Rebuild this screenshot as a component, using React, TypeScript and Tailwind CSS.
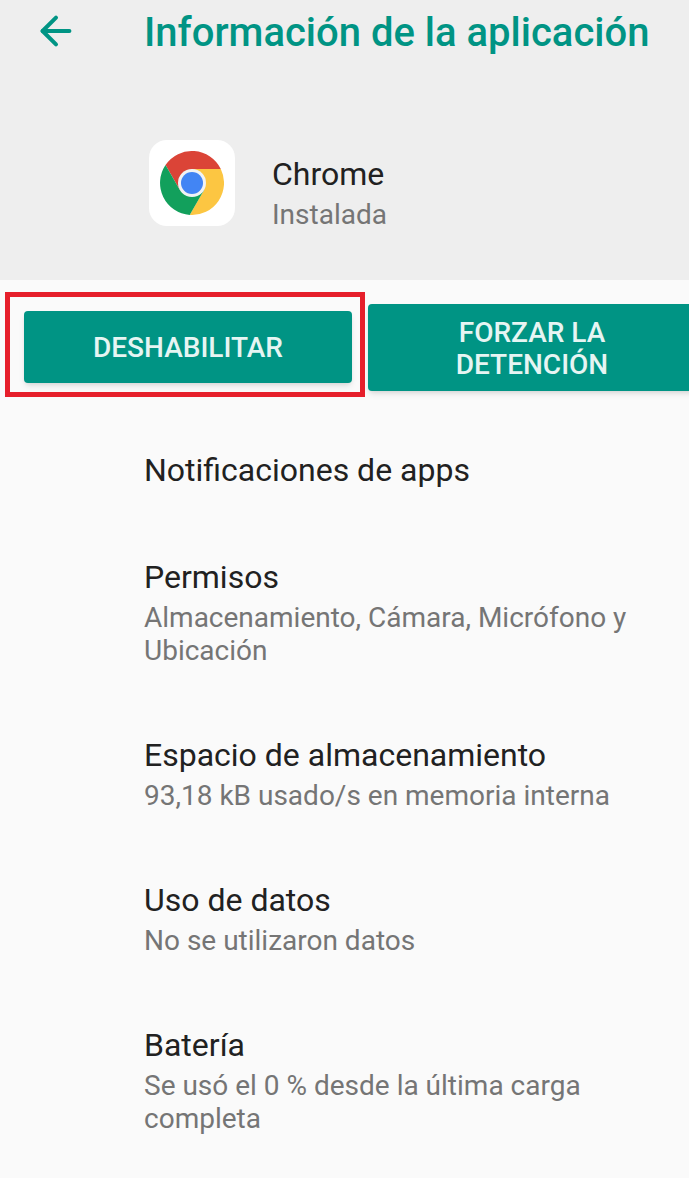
import { ArrowLeft } from 'lucide-react';

const font = { fontFamily: 'Roboto, sans-serif' };

function ChromeLogo() {
	return (
		<svg width="64" height="64" viewBox="0 0 64 64">
			<path d="M5.5 14.1 A32 32 0 0 1 60.8 18 L32 18 L19.9 39 Z" fill="#db4437" />
			<path d="M60.8 18 A32 32 0 0 1 29.7 63.9 L44.1 39 L32 18 Z" fill="#fcc642" />
			<path d="M29.7 63.9 A32 32 0 0 1 5.5 14.1 L19.9 39 L44.1 39 Z" fill="#12a05c" />
			<circle cx="32" cy="32" r="14" fill="#f1f3f4" />
			<circle cx="32" cy="32" r="11" fill="#4285f4" />
		</svg>
	);
}

function Row({ title, sub }: { title: string; sub?: string }) {
	return (
		<div className="mt-[69px] first:mt-[60px]">
			<div className="text-[32px] leading-[38px] text-[#212121]">{title}</div>
			{sub && <div className="mt-[5px] text-[28px] leading-[33px] text-[#757575]">{sub}</div>}
		</div>
	);
}

export default function App() {
	return (
		<div className="relative h-[1178px] w-[689px] overflow-hidden bg-[#fafafa]" style={font}>
			<header className="h-[280px] bg-[#eeeeee]">
				<div className="flex h-[66px] items-center">
					<ArrowLeft className="mb-[4px] ml-[33px] shrink-0 text-[#009484]" size={46} strokeWidth={2.1} />
					<h1 className="ml-[65px] whitespace-nowrap text-[40px] font-medium text-[#009484]">Información de la aplicación</h1>
				</div>
				<div className="ml-[149px] mt-[74px] flex items-start">
					<div className="flex h-[86px] w-[86px] items-center justify-center rounded-[18px] bg-white">
						<ChromeLogo />
					</div>
					<div className="ml-[37px] mt-[14px]">
						<div className="text-[32px] leading-[41px] text-[#212121]">Chrome</div>
						<div className="mt-[3px] text-[28px] leading-[33px] text-[#757575]">Instalada</div>
					</div>
				</div>
			</header>

			<div className="flex items-start pl-[24px] pt-[24px]">
				<button className="mt-[7px] h-[72px] w-[328px] shrink-0 rounded-[4px] bg-[#009484] pt-[2px] text-[28px] font-medium text-[#e6f5f3] shadow-md">DESHABILITAR</button>
				<button className="ml-[16px] h-[87px] w-[328px] shrink-0 rounded-[4px] bg-[#009484] pt-[2px] text-[28px] font-medium leading-[32px] text-[#e6f5f3] shadow-md">
					FORZAR LA<br />DETENCIÓN
				</button>
			</div>

			<div className="pl-[144px]">
				<Row title="Notificaciones de apps" />
				<Row title="Permisos" sub="Almacenamiento, Cámara, Micrófono y Ubicación" />
				<Row title="Espacio de almacenamiento" sub="93,18 kB usado/s en memoria interna" />
				<Row title="Uso de datos" sub="No se utilizaron datos" />
				<Row title="Batería" sub="Se usó el 0 % desde la última carga completa" />
			</div>

			<div className="absolute left-[5px] top-[292px] h-[105px] w-[360px] border-[5px] border-[#e61f2b]" />
		</div>
	);
}
